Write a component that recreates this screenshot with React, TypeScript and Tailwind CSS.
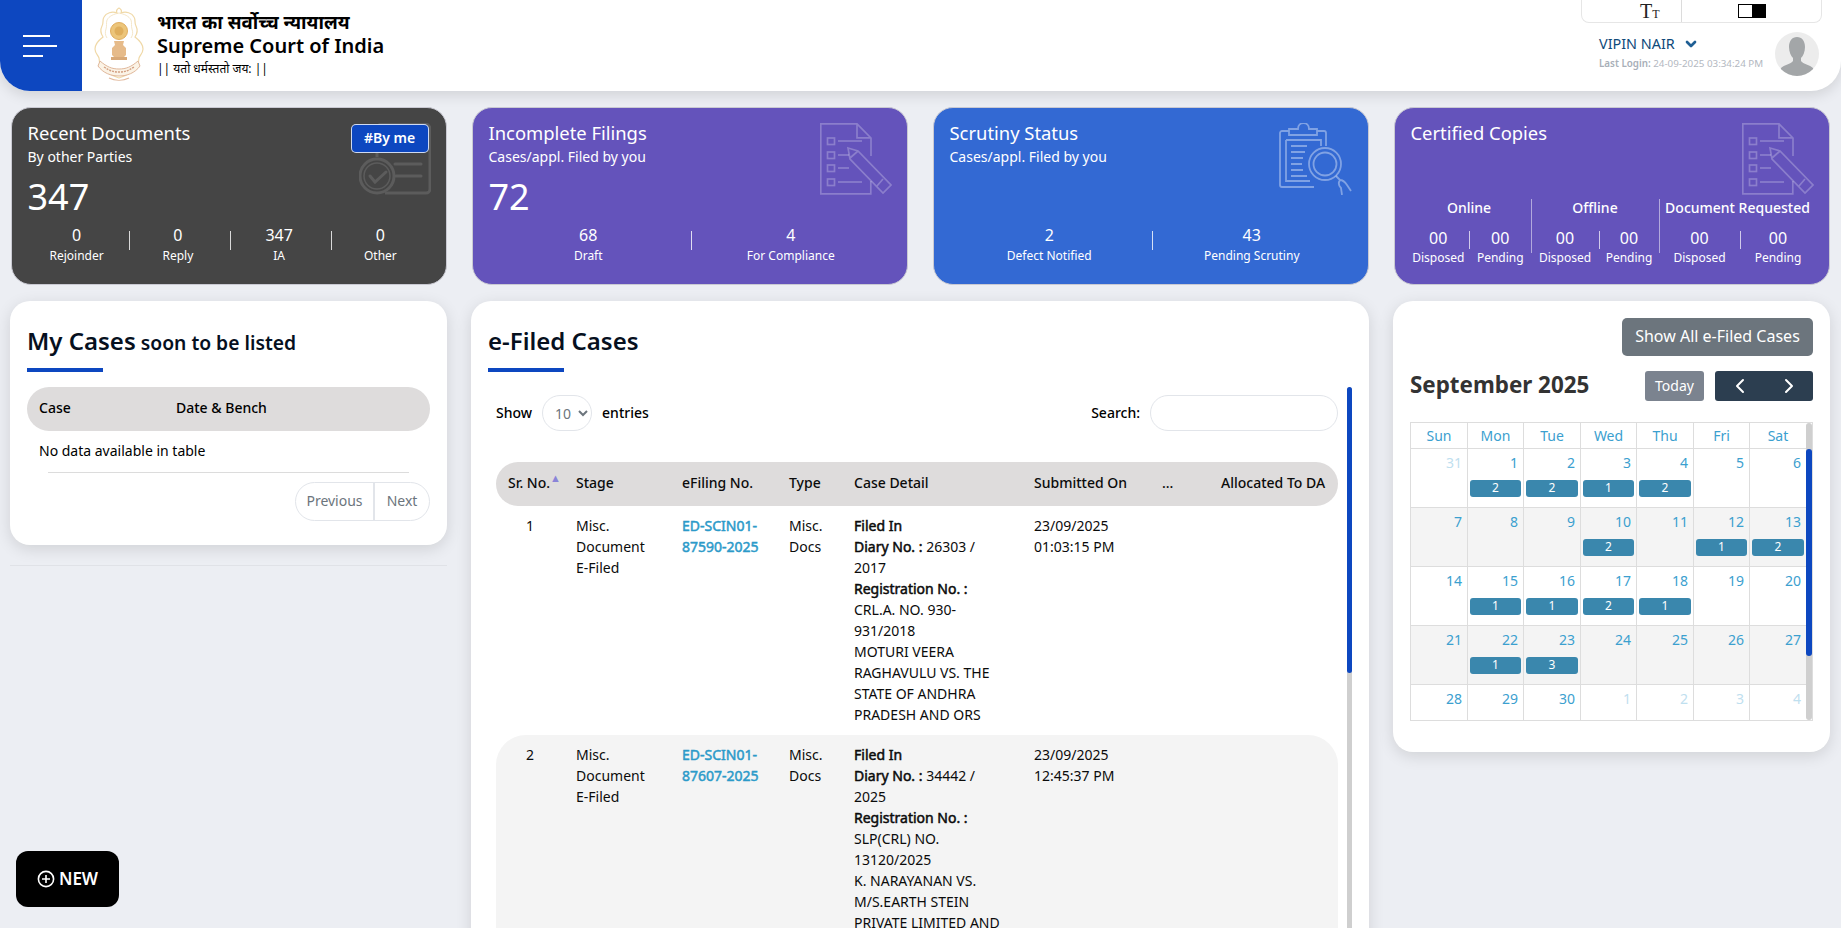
import React from "react";
import { ChevronDown, ChevronLeft, ChevronRight } from "lucide-react";

function DocPencil() {
  return (
    <svg width="72" height="72" viewBox="0 0 72 72" fill="none" stroke="#ffffff" strokeOpacity="0.25" strokeWidth="1.7" className="absolute right-[15px] top-[15px]">
      <path d="M37 .8H.8v70h50V58M51 33V15L37 .8v14h14" />
      {[15, 29, 42, 56].map((y) => (
        <React.Fragment key={y}>
          <rect x="7.5" y={y} width="7" height="6.5" />
          <path d={`M18 ${y + 3}H${y === 29 || y === 42 ? 29 : 42}`} />
        </React.Fragment>
      ))}
      <path d="M28 25l10 3 33 34-8 8-33-34zM30 35l8-7M57 63l6-7" />
    </svg>
  );
}

function Scrutiny() {
  return (
    <svg width="74" height="72" viewBox="0 0 74 72" fill="none" stroke="#ffffff" strokeOpacity="0.38" strokeWidth="1.8" className="absolute right-[15px] top-[15px]">
      <path d="M10 8H3a2 2 0 0 0-2 2v52a2 2 0 0 0 2 2h32M38 8h7a2 2 0 0 1 2 2v13M10 12V6h9c0-8 11-8 11 0h8v6z" />
      <path d="M7 17v41h24M7 17h35v6" />
      <path d="M12 23h16M12 29h14M12 35h12M12 41h11M12 47h12M12 53h16" />
      <circle cx="46" cy="41" r="16" />
      <circle cx="46" cy="41" r="11.5" />
      <path d="M57 53l4 4c3 0 5 2 7 5l4 6M61 57c-2 3-1 6 1 8l1 7" />
    </svg>
  );
}

function RecentIcon() {
  return (
    <svg width="72" height="72" viewBox="0 0 72 72" fill="none" stroke="#5c5c5c" strokeWidth="3" className="absolute right-[15px] top-[15px]">
      <path d="M18 34V6a5 5 0 0 1 5-5h43a5 5 0 0 1 5 5v60a4 4 0 0 1-4 4H26" />
      <circle cx="18" cy="53" r="17" fill="#454545" />
      <circle cx="18" cy="53" r="13" strokeWidth="1.5" />
      <path d="M11 53l5 6 11-10M36 41h26M37 53h25" strokeLinecap="round" />
    </svg>
  );
}

function Emblem() {
  return (
    <svg width="50" height="76" viewBox="0 0 50 76" fill="none" className="mt-[7px] ml-[12px] shrink-0">
      <path d="M25 1c2 1 3 3 2 5 5-2 11 0 13 4 2 3 0 6 2 9 2 4 1 8-1 11 4 3 8 7 8 12 0 4-3 6-4 9 0 6-3 10-8 14-4 3-8 5-12 6-4-1-8-3-12-6-5-4-8-8-8-14-1-3-4-5-4-9 0-5 4-9 8-12-2-3-3-7-1-11 2-3 0-6 2-9 2-4 8-6 13-4-1-2 0-4 2-5z" stroke="#f0d9a8" strokeWidth="1.2" />
      <path d="M25 6c5 1 10 3 12 7 1 3 0 6 1 9 1 3 1 6-1 9M25 6c-5 1-10 3-12 7-1 3 0 6-1 9-1 3-1 6 1 9" stroke="#f3e3c2" strokeWidth="0.9" />
      <circle cx="25" cy="24" r="8.5" fill="#ecc57a" stroke="#e0ad5e" strokeWidth="1" />
      <circle cx="25" cy="24" r="4.5" fill="#dfae5c" />
      <path d="M20 34h10l-1 4 3 3v7l-2 2H20l-2-2v-7l3-3z" fill="#e6bb8a" />
      <path d="M17 50h16v3H17z" fill="#d8a978" />
      <path d="M6 54c7 6 12 8 19 8s12-2 19-8l2 5c-5 7-13 10-21 10S9 66 4 59z" fill="#fbf3e6" stroke="#e0b79a" strokeWidth="1" />
      <path d="M10 60c6 4 10 5 15 5s9-1 15-5" stroke="#d3a083" strokeWidth="1.4" strokeDasharray="2 1" />
      <path d="M15 71c6 3 14 3 20 0" stroke="#e0b79a" strokeWidth="1.2" />
    </svg>
  );
}

function Stat({ value, label }: { value: string; label: string }) {
  return (
    <div className="flex-1 text-center">
      <div className="text-[16px] leading-[22px]">{value}</div>
      <div className="text-[12px] leading-[18px] mt-[1px]">{label}</div>
    </div>
  );
}

function Divider() {
  return <div className="w-px h-[19px] bg-white/80 mt-[7px] shrink-0 ml-[2px] -mr-[2px]" />;
}

function Card({ bg, title, sub, num, icon, children }: { bg: string; title: string; sub?: string; num?: string; icon: React.ReactNode; children: React.ReactNode }) {
  return (
    <div className={`relative h-[178px] w-[436px] rounded-[20px] border border-[#c9c9d2] px-[16px] pt-[12px] text-white flex flex-col ${bg}`}>
      {icon}
      <div className="text-[18.4px] leading-[26px]">{title}</div>
      {sub ? <div className="text-[14px] leading-[20px] mt-[1px]">{sub}</div> : <div className="h-[21px]" />}
      <div className="text-[36px] leading-[48px] mt-[6px] h-[48px]">{num}</div>
      {children}
    </div>
  );
}

function CopyPair({ title, w, a, b, last }: { title: string; w: string; a: string; b: string; last?: boolean }) {
  return (
    <div className={`shrink-0 text-center ${w} ${last ? "" : "border-r border-white/50"} h-[54px]`}>
      <div className="text-[14px] leading-[18px] font-medium whitespace-nowrap">{title}</div>
      <div className="flex mt-[11px]">
        <div className={`${a} text-center`}>
          <div className="text-[16px] leading-[21px]">00</div>
          <div className="text-[12px] leading-[18px]">Disposed</div>
        </div>
        <div className="w-px h-[18px] bg-white/70 mt-[3px] shrink-0" />
        <div className={`${b} text-center`}>
          <div className="text-[16px] leading-[21px]">00</div>
          <div className="text-[12px] leading-[18px]">Pending</div>
        </div>
      </div>
    </div>
  );
}

const weeks: { d: string; muted?: boolean; e?: string }[][] = [
  [{ d: "31", muted: true }, { d: "1", e: "2" }, { d: "2", e: "2" }, { d: "3", e: "1" }, { d: "4", e: "2" }, { d: "5" }, { d: "6" }],
  [{ d: "7" }, { d: "8" }, { d: "9" }, { d: "10", e: "2" }, { d: "11" }, { d: "12", e: "1" }, { d: "13", e: "2" }],
  [{ d: "14" }, { d: "15", e: "1" }, { d: "16", e: "1" }, { d: "17", e: "2" }, { d: "18", e: "1" }, { d: "19" }, { d: "20" }],
  [{ d: "21" }, { d: "22", e: "1" }, { d: "23", e: "3" }, { d: "24" }, { d: "25" }, { d: "26" }, { d: "27" }],
  [{ d: "28" }, { d: "29" }, { d: "30" }, { d: "1", muted: true }, { d: "2", muted: true }, { d: "3", muted: true }, { d: "4", muted: true }],
];

function Calendar() {
  return (
    <div className="relative w-[403px] border border-[#ddd] pr-[6px]">
      <div className="grid grid-cols-[57px_56px_57px_56px_57px_56px_56px] text-[14px] text-[#3ba0cf]">
        {["Sun", "Mon", "Tue", "Wed", "Thu", "Fri", "Sat"].map((d, i) => (
          <div key={d} className={`h-[26px] leading-[25px] text-center border-b border-[#ddd] ${i < 6 ? "border-r" : ""}`}>{d}</div>
        ))}
        {weeks.map((w, wi) =>
          w.map((c, i) => (
            <div
              key={`${wi}-${i}`}
              className={`${wi === 4 ? "h-[35px]" : "h-[59px] border-b"} border-[#ddd] ${i < 6 ? "border-r" : ""} ${wi % 2 === 1 ? "bg-[#f4f4f4]" : ""}`}
            >
              <div className={`text-right pr-[5px] leading-[20px] pt-[4px] h-[31px] ${c.muted ? "text-[#bfe0ef]" : ""}`}>{c.d}</div>
              {c.e && <div className="h-[17px] ml-[2px] mr-[2px] rounded-[3px] bg-[#3a87ad] text-white text-[12px] leading-[15px] text-center">{c.e}</div>}
            </div>
          ))
        )}
      </div>
      <div className="absolute right-0 top-0 bottom-0 w-[6px] rounded bg-[#cfcfcf]">
        <div className="mt-[26px] h-[207px] rounded bg-[#0d47c0]" />
      </div>
    </div>
  );
}

const bold = "[-webkit-text-stroke:0.5px_currentColor]";

function CaseRow({ n, no, diary, year, reg, parties, time, shaded }: { n: string; no: string[]; diary: string; year: string; reg: string; parties: string; time: string; shaded?: boolean }) {
  const td = "align-top pt-[9px] pb-[10px] pl-[10px]";
  return (
    <tr className={shaded ? "bg-[#f4f4f4]" : ""}>
      <td className={`align-top pt-[9px] pb-[10px] pr-[2px] text-center ${shaded ? "rounded-tl-[30px]" : ""}`}>{n}</td>
      <td className={td}>Misc.<br />Document<br />E-Filed</td>
      <td className={`${td} ${bold} text-[#2c9ac9]`}>{no[0]}<br />{no[1]}</td>
      <td className={td}>Misc.<br />Docs</td>
      <td className={td}>
        <div className="w-[150px]">
          <div className={bold}>Filed In</div>
          <div><span className={bold}>Diary No. :</span> {diary} / {year}</div>
          <div className={bold}>Registration No. :</div>
          <div>{reg}</div>
          <div>{parties}</div>
        </div>
      </td>
      <td className={td}>23/09/2025<br />{time}</td>
      <td className={td}></td>
      <td className={`${td} ${shaded ? "rounded-tr-[30px]" : ""}`}></td>
    </tr>
  );
}

export default function App() {
  return (
    <div className="h-[928px] w-full overflow-hidden bg-[#eceef3] text-black relative" style={{ fontFamily: '"Noto Sans", sans-serif' }}>
      <header className="h-[91px] bg-white rounded-b-[30px] shadow-[0_4px_14px_rgba(0,0,0,0.12)] flex relative">
        <div className="w-[82px] h-full bg-[#0d47c0] rounded-bl-[30px] flex flex-col justify-center gap-[8px] pl-[23px]">
          <div className="h-[2px] w-[27px] bg-white" />
          <div className="h-[2px] w-[34px] bg-white" />
          <div className="h-[2px] w-[20px] bg-white" />
        </div>
        <Emblem />
        <div className="ml-[13px] pt-[9px]">
          <div className="text-[18.7px] leading-[25px] font-bold">भारत का सर्वोच्च न्यायालय</div>
          <div className="text-[20px] leading-[24px] font-semibold">Supreme Court of India</div>
          <div className="text-[12px] leading-[16px] mt-[3px]">|| यतो धर्मस्ततो जय: ||</div>
        </div>
        <div className="ml-auto w-[260px] pr-[19px] flex flex-col items-end">
          <div className="w-[241px] h-[23px] border border-t-0 border-[#e6e6e6] rounded-b-[8px] flex">
            <div className="w-[100px] border-r border-[#dcdcdc] pl-[58px] text-[#222] leading-[22px] whitespace-nowrap" style={{ fontFamily: '"Liberation Serif", serif' }}>
              <span className="text-[20px]">T</span><span className="text-[12px]">T</span>
            </div>
            <div className="flex-1 flex items-center justify-center">
              <div className="w-[28px] h-[14px] border border-black flex">
                <div className="w-[13px] bg-white" />
                <div className="flex-1 bg-black" />
              </div>
            </div>
          </div>
          <div className="flex mt-[9px] w-full pr-[3px]">
            <div className="ml-[18px] flex-1">
              <div className="flex items-center text-[14.4px] leading-[20px] text-[#0f4a7a] mt-[2px]">
                VIPIN NAIR
                <ChevronDown size={16} strokeWidth={4} className="ml-[8px] text-[#1f5f94]" />
              </div>
              <div className="text-[9.8px] leading-[14px] mt-[3px] text-[#b3b8bf] whitespace-nowrap"><span className="font-semibold text-[#a8afb8]">Last Login:</span> 24-09-2025 03:34:24 PM</div>
            </div>
            <div className="w-[44px] h-[44px] rounded-full bg-[#ececec] overflow-hidden shrink-0">
              <svg width="44" height="44" viewBox="0 0 44 44" fill="#a3a6a8">
                <path d="M22 5c5 0 8 4 8 10 0 5-2 9-4 11v3c2 3 9 4 12 7 1 2 1 5 1 8H5c0-3 0-6 1-8 3-3 10-4 12-7v-3c-2-2-4-6-4-11 0-6 3-10 8-10z" />
              </svg>
            </div>
          </div>
        </div>
      </header>

      <div className="flex gap-[25px] pl-[10.5px] mt-[16px]">
        <Card bg="bg-[#454545]" title="Recent Documents" sub="By other Parties" num="347" icon={<RecentIcon />}>
          <div className="absolute right-[17px] top-[16px] w-[78px] h-[29px] rounded-[5px] bg-[#0d47c0] border border-white/80 text-[14px] font-semibold leading-[26px] text-center">#By me</div>
          <div className="flex mt-[3px] -mx-[1px]">
            <Stat value="0" label="Rejoinder" /><Divider />
            <Stat value="0" label="Reply" /><Divider />
            <Stat value="347" label="IA" /><Divider />
            <Stat value="0" label="Other" />
          </div>
        </Card>
        <Card bg="bg-[#6453bb]" title="Incomplete Filings" sub="Cases/appl. Filed by you" num="72" icon={<DocPencil />}>
          <div className="flex mt-[3px] -mx-[1px]">
            <Stat value="68" label="Draft" /><Divider />
            <Stat value="4" label="For Compliance" />
          </div>
        </Card>
        <Card bg="bg-[#3369d3]" title="Scrutiny Status" sub="Cases/appl. Filed by you" icon={<Scrutiny />}>
          <div className="flex mt-[3px] -mx-[1px]">
            <Stat value="2" label="Defect Notified" /><Divider />
            <Stat value="43" label="Pending Scrutiny" />
          </div>
        </Card>
        <Card bg="bg-[#6453bb]" title="Certified Copies" icon={<DocPencil />}>
          <div className="flex -mt-[22px] -mx-[3px]">
            <CopyPair title="Online" w="w-[124px]" a="w-[62px]" b="w-[61px]" />
            <CopyPair title="Offline" w="w-[128px]" a="w-[67px]" b="w-[59px]" />
            <CopyPair title="Document Requested" w="w-[156px]" a="w-[80px]" b="w-[75px]" last />
          </div>
        </Card>
      </div>

      <div className="flex gap-[24px] pl-[10px] mt-[16px] items-start text-[14px]">
        <div className="w-[437px] shrink-0">
          <div className="h-[244px] bg-white rounded-[20px] shadow-[0_4px_16px_rgba(0,0,0,0.12)] px-[17px] pt-[25px]">
            <div className="h-[30px] leading-[30px] font-semibold text-[19.3px] text-[#06101e] whitespace-nowrap"><span className="text-[24px]">My Cases</span> soon to be listed</div>
            <div className="h-[4px] w-[76px] bg-[#0d47c0] mt-[12px]" />
            <div className="h-[44px] bg-[#dedcdc] rounded-[22px] mt-[15px] flex items-center pl-[12px] pb-[3px] font-medium">
              <div className="w-[137px]">Case</div>
              <div>Date &amp; Bench</div>
            </div>
            <div className="pl-[12px] leading-[20px] mt-[10px]">No data available in table</div>
            <div className="h-px bg-[#dcdcdc] mx-[21px] mt-[11px]" />
            <div className="flex justify-end mt-[9px] text-[#6c757d]">
              <div className="flex h-[39px] border border-[#e2e5ea] rounded-[20px] leading-[36px]">
                <div className="w-[79px] text-center border-r-2 border-[#e2e5ea]">Previous</div>
                <div className="w-[54px] text-center">Next</div>
              </div>
            </div>
          </div>
          <div className="h-px bg-[#e0e2e7] mt-[20px]" />
        </div>

        <div className="w-[898px] h-[700px] shrink-0 bg-white rounded-t-[20px] shadow-[0_4px_16px_rgba(0,0,0,0.12)] pl-[17px] pt-[23px]">
          <div className="text-[24px] leading-[33px] font-semibold text-[#06101e]">e-Filed Cases</div>
          <div className="h-[4px] w-[76px] bg-[#0d47c0] mt-[11px]" />
          <div className="relative mt-[15px] pl-[8px] w-[864px] h-[600px] overflow-hidden">
            <div className="w-[842px]">
              <div className="flex items-center h-[36px] mt-[8px]">
                <span className="font-medium pb-[1px]">Show</span>
                <select className="ml-[10px] w-[50px] h-[36px] border border-[#e2e5ea] rounded-[18px] pl-[8px] text-[#6c757d] bg-white" defaultValue="10">
                  <option>10</option>
                </select>
                <span className="ml-[10px] font-medium pb-[1px]">entries</span>
                <span className="ml-auto font-medium pb-[1px]">Search:</span>
                <div className="ml-[10px] w-[188px] h-[36px] border border-[#e2e5ea] rounded-[18px]" />
              </div>
              <table className="table-fixed w-full mt-[31px] border-collapse leading-[21px] text-[#0b0b0b]">
                <colgroup>
                  <col className="w-[70px]" /><col className="w-[106px]" /><col className="w-[107px]" /><col className="w-[65px]" /><col className="w-[180px]" /><col className="w-[128px]" /><col className="w-[59px]" /><col />
                </colgroup>
                <thead>
                  <tr className="h-[44px] bg-[#dedcdc] text-left font-medium">
                    <th className="font-medium text-center rounded-l-[22px] whitespace-nowrap pl-[7px] pb-[3px]">Sr. No.<span className="text-[#8a84d8] text-[11px] leading-[11px] align-top">▲</span></th>
                    <th className="font-medium pl-[10px] pb-[3px]">Stage</th>
                    <th className="font-medium pl-[10px] pb-[3px]">eFiling No.</th>
                    <th className="font-medium pl-[10px] pb-[3px]">Type</th>
                    <th className="font-medium pl-[10px] pb-[3px]">Case Detail</th>
                    <th className="font-medium pl-[10px] pb-[3px] whitespace-nowrap">Submitted On</th>
                    <th className="font-medium pl-[10px] pb-[3px]">...</th>
                    <th className="font-medium pl-[10px] pb-[3px] rounded-r-[22px] whitespace-nowrap">Allocated To DA</th>
                  </tr>
                </thead>
                <tbody>
                  <CaseRow n="1" no={["ED-SCIN01-", "87590-2025"]} diary="26303" year="2017" reg="CRL.A. NO. 930-931/2018" parties="MOTURI VEERA RAGHAVULU VS. THE STATE OF ANDHRA PRADESH AND ORS" time="01:03:15 PM" />
                  <CaseRow n="2" no={["ED-SCIN01-", "87607-2025"]} diary="34442" year="2025" reg="SLP(CRL) NO. 13120/2025" parties="K. NARAYANAN VS. M/S.EARTH STEIN PRIVATE LIMITED AND ANR" time="12:45:37 PM" shaded />
                </tbody>
              </table>
            </div>
            <div className="absolute left-[859px] top-[0px] bottom-0 w-[5px] rounded bg-[#cfcfcf]">
              <div className="h-[286px] rounded bg-[#0d47c0]" />
            </div>
          </div>
        </div>

        <div className="w-[437px] h-[451px] shrink-0 bg-white rounded-[20px] shadow-[0_4px_16px_rgba(0,0,0,0.12)] px-[17px] pt-[17px]">
          <div className="flex justify-end">
            <div className="w-[191px] h-[38px] rounded-[5px] bg-[#6c757d] text-white text-[16px] leading-[36px] text-center whitespace-nowrap">Show All e-Filed Cases</div>
          </div>
          <div className="flex items-center h-[30px] mt-[15px]">
            <div className="text-[22.4px] leading-[28px] pb-[2px] font-bold text-[#333] whitespace-nowrap">September 2025</div>
            <div className="ml-auto w-[59px] h-[30px] rounded-[3px] bg-[#7b838f] text-white text-center leading-[30px]">Today</div>
            <div className="ml-[11px] w-[98px] h-[30px] rounded-[3px] bg-[#2c3e50] text-white flex items-center justify-around">
              <ChevronLeft size={24} strokeWidth={2} />
              <ChevronRight size={24} strokeWidth={2} />
            </div>
          </div>
          <div className="mt-[21px]"><Calendar /></div>
        </div>
      </div>

      <div className="absolute left-[16px] top-[851px] w-[103px] h-[56px] rounded-[12px] bg-black text-white flex items-center justify-center gap-[4px] text-[17px] font-semibold">
        <svg width="18" height="18" viewBox="0 0 18 18" fill="none" stroke="white" strokeWidth="1.6"><circle cx="9" cy="9" r="7.6" /><path d="M9 5v8M5 9h8" /></svg>
        NEW
      </div>
    </div>
  );
}
